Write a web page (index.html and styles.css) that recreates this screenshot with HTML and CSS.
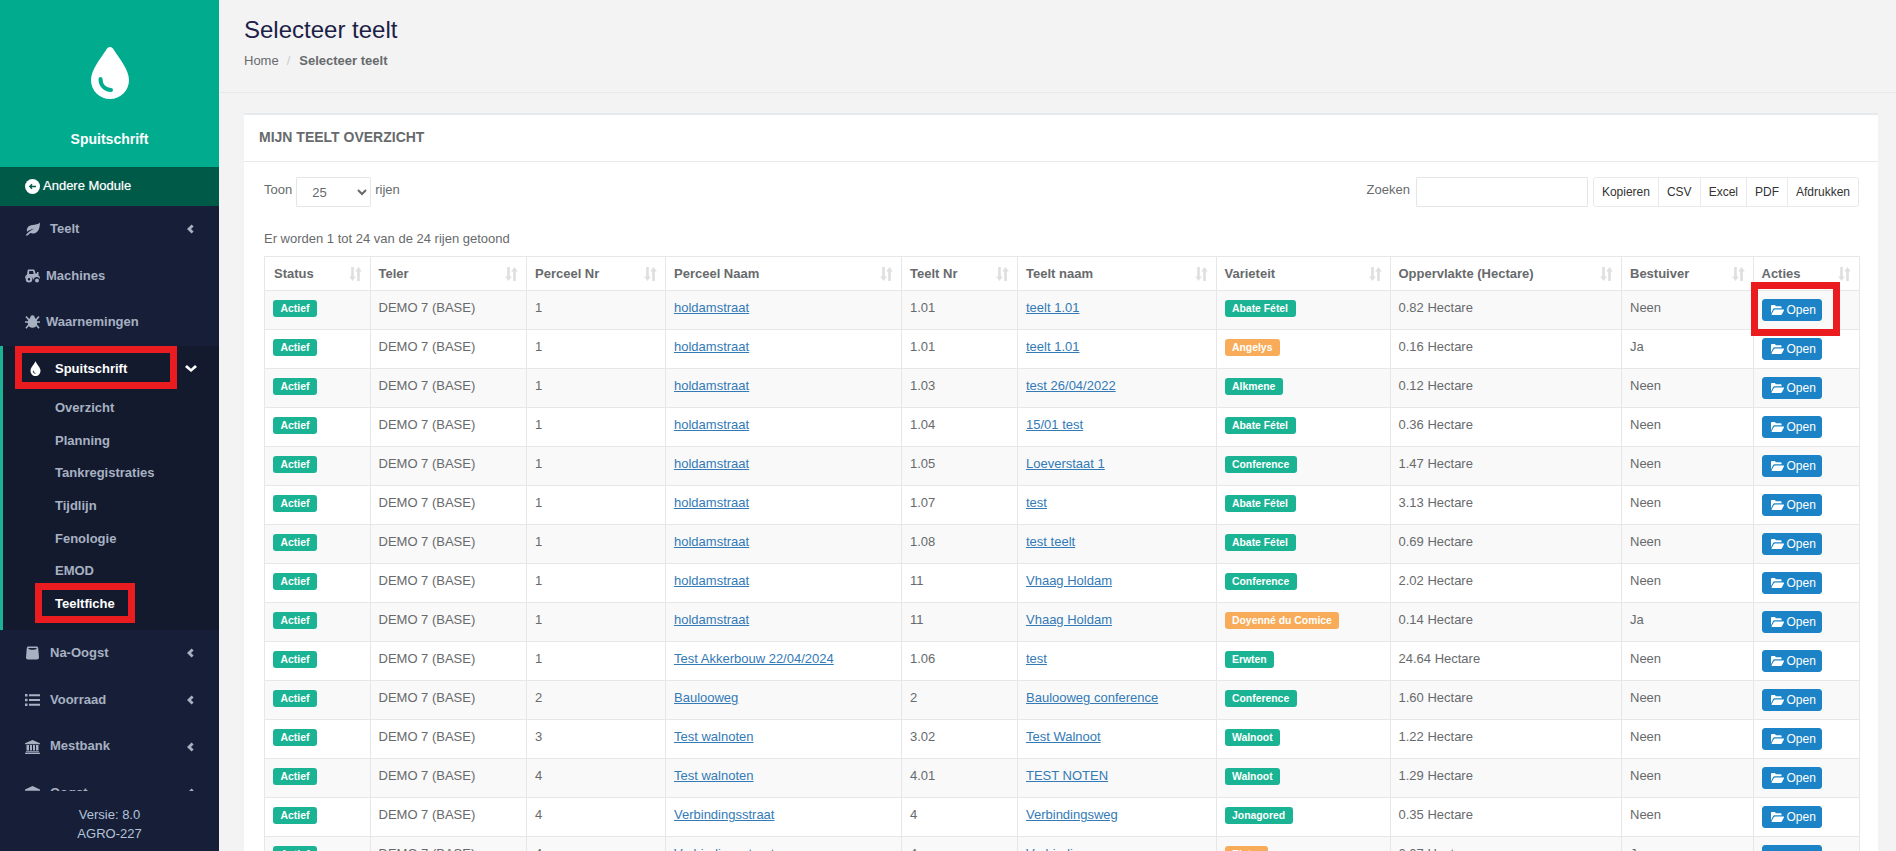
FILE: index.html
```html
<!DOCTYPE html>
<html lang="nl">

<head>
    <meta charset="UTF-8">
    <meta name="viewport" content="width=device-width, initial-scale=1.0">
    <title>Selecteer teelt</title>
    <link rel="stylesheet" href="styles.css">
</head>

<body>
    <svg class="icon-defs" aria-hidden="true">
        <symbol id="i-folder" viewBox="0 0 14 12">
            <path d="M0 9.600V1.900C0 1.200.5.700 1.200.700h2.600c.6 0 .9.300 1.100.8l.2.400h5.100c.7 0 1.200.5 1.200 1.200v1H3.900c-.7 0-1.200.3-1.600.9L0 9.600z"/>
            <path d="M1 11.300h9.600c.5 0 .9-.2 1.200-.7L14 6.400c.2-.5 0-.9-.6-.9H4.200c-.5 0-.9.200-1.200.7L.7 10.400c-.2.500 0 .9.300.9z"/>
        </symbol>
        <symbol id="i-sort" viewBox="0 0 13 14">
            <path d="M2.200 0h2.600v9.600h2L3.500 14 .2 9.600h2z"/>
            <path d="M8.200 14h2.600V4.400h2L9.500 0 6.200 4.400h2z"/>
        </symbol>
        <symbol id="i-left" viewBox="0 0 8 10">
            <path d="M5.600.4l2 2L5 5l2.600 2.600-2 2L1 5z"/>
        </symbol>
        <symbol id="i-down" viewBox="0 0 12 7">
            <path d="M2 0l4 3.800L10 0l2 2-6 5-6-5z"/>
        </symbol>
    </svg>

    <aside class="sidebar">
        <div class="brand">
            <svg class="brand-drop" viewBox="0 0 38 52">
                <path fill="#fff" d="M19 0c1.400 0 2.500.8 3.300 2C28 11 38 22.500 38 33c0 10.800-8.500 19-19 19S0 43.800 0 33C0 22.500 10 11 15.700 2 16.500.8 17.600 0 19 0z"/>
                <path fill="none" stroke="#00ab8e" stroke-width="4" stroke-linecap="round" d="M9.500 32c0 6.500 4.500 11 10.500 11"/>
            </svg>
            <div class="brand-name">Spuitschrift</div>
        </div>
        <a class="module-link" href="#">
            <svg class="module-icon" viewBox="0 0 15 15">
                <circle cx="7.500" cy="7.500" r="7.500" fill="#fff"/>
                <path fill="none" stroke="#005a48" stroke-width="1.300" d="M11 7.500H5M7 5.300L4.800 7.500 7 9.700"/>
            </svg>
            Andere Module
        </a>

        <nav class="side-scroll">
            <ul class="side-nav">
                <li>
                    <a class="nav-link" href="#">
                        <svg class="nav-icon" viewBox="0 0 16 14"><path d="M16 0c-.2 3.500-.5 7-2.500 9.300-2 2.400-5 3-7.800 2L2.800 14H.6C2 11.700 5.400 8.800 9.600 6.800 6.300 7.300 3.800 8.800 2.300 10 1 6 3.800 3 8 2.600 11 2.300 14 2 16 0z"/></svg>
                        Teelt
                        <svg class="nav-arrow"><use href="#i-left"/></svg>
                    </a>
                </li>
                <li>
                    <a class="nav-link" href="#">
                        <svg class="nav-icon tight" viewBox="0 0 15 13"><path fill-rule="evenodd" d="M3.500 0h5c.6 0 1 .3 1.200.9l.8 3.100h1.500V2.500h1.500V6c.9.500 1.500 1.400 1.500 2.500v.5h-.6a3.200 3.200 0 0 0-5.800 1H8a4 4 0 0 0-7.800-.5L0 8.500C0 7 .8 5.900 2 5.300L2.600.9C2.700.3 3 0 3.500 0zM4.300 1.500L4 4.500h4.700L8 1.500zM4 6.500a3 3 0 1 1 0 6.500 3 3 0 0 1 0-6.500zm0 2a1.200 1.200 0 1 0 0 2.500 1.200 1.200 0 0 0 0-2.500zM12 9a2 2 0 1 1 0 4 2 2 0 0 1 0-4z"/></svg>
                        Machines
                    </a>
                </li>
                <li>
                    <a class="nav-link" href="#">
                        <svg class="nav-icon tight" viewBox="0 0 15 13"><ellipse cx="7.500" cy="7" rx="4.800" ry="5.200"/><circle cx="7.500" cy="2" r="2.200"/><path fill="none" stroke="currentColor" stroke-width="1.600" d="M0 6.500h15M1 1l3 3.500M14 1l-3 3.500M1 12.700l3-3.700M14 12.700l-3-3.700"/></svg>
                        Waarnemingen
                    </a>
                </li>
                <li class="active">
                    <span class="mark-box mark-nav"></span>
                    <a class="nav-link" href="#">
                        <svg class="nav-icon drop" viewBox="0 0 15 15"><path fill-rule="evenodd" d="M7.500 0c.4 2.500 5 6 5 9.700 0 3-2.200 5.300-5 5.300s-5-2.300-5-5.300C2.500 6 7.100 2.500 7.500 0zM4.800 9.800c0 1.700 1.200 2.900 2.700 2.900v-.8c-1 0-1.900-.9-1.900-2.100z"/></svg>
                        Spuitschrift
                        <svg class="nav-arrow down"><use href="#i-down"/></svg>
                    </a>
                    <ul class="sub-nav">
                        <li><a href="#">Overzicht</a></li>
                        <li><a href="#">Planning</a></li>
                        <li><a href="#">Tankregistraties</a></li>
                        <li><a href="#">Tijdlijn</a></li>
                        <li><a href="#">Fenologie</a></li>
                        <li><a href="#">EMOD</a></li>
                        <li class="current"><span class="mark-box mark-sub"></span><a href="#">Teeltfiche</a></li>
                    </ul>
                </li>
                <li>
                    <a class="nav-link" href="#">
                        <svg class="nav-icon" viewBox="0 0 15 13"><path fill-rule="evenodd" d="M3.500 0h8c1 0 1.600.6 1.700 1.500l.8 9.500c0 1.200-.8 2-2 2H3c-1.200 0-2-.8-2-2l.8-9.500C1.900.6 2.500 0 3.500 0zm0 1.600v1c1.300.9 6.700.9 8 0v-1z"/></svg>
                        Na-Oogst
                        <svg class="nav-arrow"><use href="#i-left"/></svg>
                    </a>
                </li>
                <li>
                    <a class="nav-link" href="#">
                        <svg class="nav-icon" viewBox="0 0 15 12"><path d="M0 0h2.500v2.400H0zM4 .2h11v2H4zM0 4.800h2.500v2.400H0zM4 5h11v2H4zM0 9.600h2.500V12H0zM4 9.800h11v2H4z"/></svg>
                        Voorraad
                        <svg class="nav-arrow"><use href="#i-left"/></svg>
                    </a>
                </li>
                <li>
                    <a class="nav-link" href="#">
                        <svg class="nav-icon" viewBox="0 0 15 14"><path d="M7.500 0L15 3.200v1H0v-1zM1.500 5H4v5.500H1.500zM5 5h2v5.500H5zM8 5h2v5.500H8zM11 5h2.500v5.500H11zM1 11.200h13v1.100H1zM0 12.800h15V14H0z"/></svg>
                        Mestbank
                        <svg class="nav-arrow"><use href="#i-left"/></svg>
                    </a>
                </li>
                <li>
                    <a class="nav-link" href="#">
                        <svg class="nav-icon" viewBox="0 0 15 14"><path d="M7.500 0L15 3.600v1.200H0V3.600zM1.500 5.500h12V14h-12z"/></svg>
                        Oogst
                        <svg class="nav-arrow"><use href="#i-left"/></svg>
                    </a>
                </li>
            </ul>
        </nav>

        <div class="side-footer">
            <div>Versie: 8.0</div>
            <div>AGRO-227</div>
        </div>
    </aside>

    <main class="main">
        <div class="page-heading">
            <h1>Selecteer teelt</h1>
            <ol class="crumbs">
                <li><a href="#">Home</a></li>
                <li class="crumb-sep">/</li>
                <li><strong>Selecteer teelt</strong></li>
            </ol>
        </div>

        <div class="content">
            <div class="card">
                <div class="card-title">MIJN TEELT OVERZICHT</div>
                <div class="card-body">
                    <div class="toolbar">
                        <div class="toolbar-side">
                            <span class="toolbar-label">Toon</span>
                            <select class="length-select">
                                <option>25</option>
                                <option>50</option>
                                <option>100</option>
                            </select>
                            <span class="toolbar-label after">rijen</span>
                        </div>
                        <div class="toolbar-side">
                            <span class="toolbar-label">Zoeken</span>
                            <input class="search-input" type="search">
                            <div class="btn-group">
                                <button>Kopieren</button>
                                <button>CSV</button>
                                <button>Excel</button>
                                <button>PDF</button>
                                <button>Afdrukken</button>
                            </div>
                        </div>
                    </div>

                    <div class="table-info">Er worden 1 tot 24 van de 24 rijen getoond</div>

                    <table class="data-table">
                        <colgroup>
                            <col class="c-status"><col class="c-teler"><col class="c-pnr"><col class="c-pnaam"><col class="c-tnr">
                            <col class="c-tnaam"><col class="c-var"><col class="c-opp"><col class="c-best"><col class="c-act">
                        </colgroup>
                        <thead>
                            <tr>
                                <th><div class="th-in">Status<svg class="sort"><use href="#i-sort"/></svg></div></th>
                                <th><div class="th-in">Teler<svg class="sort"><use href="#i-sort"/></svg></div></th>
                                <th><div class="th-in">Perceel Nr<svg class="sort"><use href="#i-sort"/></svg></div></th>
                                <th><div class="th-in">Perceel Naam<svg class="sort"><use href="#i-sort"/></svg></div></th>
                                <th><div class="th-in">Teelt Nr<svg class="sort"><use href="#i-sort"/></svg></div></th>
                                <th><div class="th-in">Teelt naam<svg class="sort"><use href="#i-sort"/></svg></div></th>
                                <th><div class="th-in">Varieteit<svg class="sort"><use href="#i-sort"/></svg></div></th>
                                <th><div class="th-in">Oppervlakte (Hectare)<svg class="sort"><use href="#i-sort"/></svg></div></th>
                                <th><div class="th-in">Bestuiver<svg class="sort"><use href="#i-sort"/></svg></div></th>
                                <th><div class="th-in">Acties<svg class="sort"><use href="#i-sort"/></svg></div></th>
                            </tr>
                        </thead>
                        <tbody>
                            <tr><td><span class="label">Actief</span></td><td>DEMO 7 (BASE)</td><td>1</td><td><a href="#">holdamstraat</a></td><td>1.01</td><td><a href="#">teelt 1.01</a></td><td><span class="label">Abate Fétel</span></td><td>0.82 Hectare</td><td>Neen</td><td class="act-cell"><span class="mark-box mark-open"></span><button class="btn-open"><svg class="folder"><use href="#i-folder"/></svg>Open</button></td></tr>
                            <tr><td><span class="label">Actief</span></td><td>DEMO 7 (BASE)</td><td>1</td><td><a href="#">holdamstraat</a></td><td>1.01</td><td><a href="#">teelt 1.01</a></td><td><span class="label warn">Angelys</span></td><td>0.16 Hectare</td><td>Ja</td><td><button class="btn-open"><svg class="folder"><use href="#i-folder"/></svg>Open</button></td></tr>
                            <tr><td><span class="label">Actief</span></td><td>DEMO 7 (BASE)</td><td>1</td><td><a href="#">holdamstraat</a></td><td>1.03</td><td><a href="#">test 26/04/2022</a></td><td><span class="label">Alkmene</span></td><td>0.12 Hectare</td><td>Neen</td><td><button class="btn-open"><svg class="folder"><use href="#i-folder"/></svg>Open</button></td></tr>
                            <tr><td><span class="label">Actief</span></td><td>DEMO 7 (BASE)</td><td>1</td><td><a href="#">holdamstraat</a></td><td>1.04</td><td><a href="#">15/01 test</a></td><td><span class="label">Abate Fétel</span></td><td>0.36 Hectare</td><td>Neen</td><td><button class="btn-open"><svg class="folder"><use href="#i-folder"/></svg>Open</button></td></tr>
                            <tr><td><span class="label">Actief</span></td><td>DEMO 7 (BASE)</td><td>1</td><td><a href="#">holdamstraat</a></td><td>1.05</td><td><a href="#">Loeverstaat 1</a></td><td><span class="label">Conference</span></td><td>1.47 Hectare</td><td>Neen</td><td><button class="btn-open"><svg class="folder"><use href="#i-folder"/></svg>Open</button></td></tr>
                            <tr><td><span class="label">Actief</span></td><td>DEMO 7 (BASE)</td><td>1</td><td><a href="#">holdamstraat</a></td><td>1.07</td><td><a href="#">test</a></td><td><span class="label">Abate Fétel</span></td><td>3.13 Hectare</td><td>Neen</td><td><button class="btn-open"><svg class="folder"><use href="#i-folder"/></svg>Open</button></td></tr>
                            <tr><td><span class="label">Actief</span></td><td>DEMO 7 (BASE)</td><td>1</td><td><a href="#">holdamstraat</a></td><td>1.08</td><td><a href="#">test teelt</a></td><td><span class="label">Abate Fétel</span></td><td>0.69 Hectare</td><td>Neen</td><td><button class="btn-open"><svg class="folder"><use href="#i-folder"/></svg>Open</button></td></tr>
                            <tr><td><span class="label">Actief</span></td><td>DEMO 7 (BASE)</td><td>1</td><td><a href="#">holdamstraat</a></td><td>11</td><td><a href="#">Vhaag Holdam</a></td><td><span class="label">Conference</span></td><td>2.02 Hectare</td><td>Neen</td><td><button class="btn-open"><svg class="folder"><use href="#i-folder"/></svg>Open</button></td></tr>
                            <tr><td><span class="label">Actief</span></td><td>DEMO 7 (BASE)</td><td>1</td><td><a href="#">holdamstraat</a></td><td>11</td><td><a href="#">Vhaag Holdam</a></td><td><span class="label warn">Doyenné du Comice</span></td><td>0.14 Hectare</td><td>Ja</td><td><button class="btn-open"><svg class="folder"><use href="#i-folder"/></svg>Open</button></td></tr>
                            <tr><td><span class="label">Actief</span></td><td>DEMO 7 (BASE)</td><td>1</td><td><a href="#">Test Akkerbouw 22/04/2024</a></td><td>1.06</td><td><a href="#">test</a></td><td><span class="label">Erwten</span></td><td>24.64 Hectare</td><td>Neen</td><td><button class="btn-open"><svg class="folder"><use href="#i-folder"/></svg>Open</button></td></tr>
                            <tr><td><span class="label">Actief</span></td><td>DEMO 7 (BASE)</td><td>2</td><td><a href="#">Baulooweg</a></td><td>2</td><td><a href="#">Baulooweg conference</a></td><td><span class="label">Conference</span></td><td>1.60 Hectare</td><td>Neen</td><td><button class="btn-open"><svg class="folder"><use href="#i-folder"/></svg>Open</button></td></tr>
                            <tr><td><span class="label">Actief</span></td><td>DEMO 7 (BASE)</td><td>3</td><td><a href="#">Test walnoten</a></td><td>3.02</td><td><a href="#">Test Walnoot</a></td><td><span class="label">Walnoot</span></td><td>1.22 Hectare</td><td>Neen</td><td><button class="btn-open"><svg class="folder"><use href="#i-folder"/></svg>Open</button></td></tr>
                            <tr><td><span class="label">Actief</span></td><td>DEMO 7 (BASE)</td><td>4</td><td><a href="#">Test walnoten</a></td><td>4.01</td><td><a href="#">TEST NOTEN</a></td><td><span class="label">Walnoot</span></td><td>1.29 Hectare</td><td>Neen</td><td><button class="btn-open"><svg class="folder"><use href="#i-folder"/></svg>Open</button></td></tr>
                            <tr><td><span class="label">Actief</span></td><td>DEMO 7 (BASE)</td><td>4</td><td><a href="#">Verbindingsstraat</a></td><td>4</td><td><a href="#">Verbindingsweg</a></td><td><span class="label">Jonagored</span></td><td>0.35 Hectare</td><td>Neen</td><td><button class="btn-open"><svg class="folder"><use href="#i-folder"/></svg>Open</button></td></tr>
                            <tr><td><span class="label">Actief</span></td><td>DEMO 7 (BASE)</td><td>4</td><td><a href="#">Verbindingsstraat</a></td><td>4</td><td><a href="#">Verbindingsweg</a></td><td><span class="label warn">Elstar</span></td><td>0.07 Hectare</td><td>Ja</td><td><button class="btn-open"><svg class="folder"><use href="#i-folder"/></svg>Open</button></td></tr>
                        </tbody>
                    </table>
                </div>
            </div>
        </div>
    </main>
</body>
</html>
```

FILE: styles.css
```css
* {
    box-sizing: border-box;
}

html, body {
    margin: 0;
    padding: 0;
    height: 100%;
    overflow: hidden;
}

body {
    display: flex;
    background-color: #f3f3f4;
    font-family: "Liberation Sans", Arial, sans-serif;
    font-size: 13px;
    line-height: 1.42857;
    color: #676a6c;
}

a {
    color: #337ab7;
}

ul, ol {
    list-style: none;
    margin: 0;
    padding: 0;
}

.icon-defs {
    position: absolute;
    width: 0;
    height: 0;
}

/* red annotation frames */
.mark-box {
    position: absolute;
    border: 7px solid #ea1c20;
    pointer-events: none;
    z-index: 5;
}

.mark-nav {
    top: 0;
    left: 12px;
    width: 162px;
    height: 43px;
}

.mark-sub {
    top: -5px;
    left: 32px;
    width: 100px;
    height: 40px;
}

.mark-open {
    top: -9px;
    left: -3px;
    width: 89px;
    height: 54px;
}

/* sidebar */
.sidebar {
    width: 219px;
    flex: none;
    height: 100%;
    display: flex;
    flex-direction: column;
    background-color: #171f38;
    color: #a7b1c2;
}

.brand {
    height: 167px;
    flex: none;
    padding-top: 47px;
    background-color: #00ab8e;
    text-align: center;
}

.brand-drop {
    display: block;
    width: 38px;
    height: 52px;
    margin: 0 auto;
}

.brand-name {
    margin-top: 31px;
    font-size: 14px;
    font-weight: bold;
    color: #fff;
}

.module-link {
    height: 39px;
    flex: none;
    display: flex;
    align-items: center;
    padding-left: 25px;
    background-color: #005a48;
    color: #fff;
    text-decoration: none;
    text-shadow: 0 0 1px rgba(255, 255, 255, 0.5);
}

.module-icon {
    width: 15px;
    height: 15px;
    margin-right: 3px;
}

.side-scroll {
    flex: 1;
    min-height: 0;
    overflow: hidden;
}

.nav-link {
    display: flex;
    align-items: center;
    padding: 14px 25px;
    color: #a7b1c2;
    font-weight: bold;
    text-decoration: none;
}

.nav-icon {
    width: 15px;
    height: 14px;
    margin-right: 10px;
    fill: currentColor;
    color: #a7b1c2;
}

.nav-icon.tight {
    margin-right: 6px;
}

.nav-arrow {
    width: 8px;
    height: 10px;
    margin-left: auto;
    fill: #a7b1c2;
}

.side-nav > li {
    position: relative;
}

.side-nav > li.active {
    background-color: #131a2e;
    border-left: 3px solid #1ab394;
}

.active .nav-link {
    color: #fff;
}

.active .nav-icon {
    color: #fff;
}

.nav-icon.drop {
    margin-right: 12px;
    height: 15px;
}

.nav-arrow.down {
    width: 12px;
    height: 7px;
    margin-right: -3px;
    fill: #fff;
}

.sub-nav {
    padding-bottom: 10px;
}

.sub-nav li {
    position: relative;
}

.sub-nav a {
    display: block;
    padding: 7px 10px 7px 52px;
    font-weight: bold;
    color: #a7b1c2;
    text-decoration: none;
}

.sub-nav .current a {
    color: #fff;
}

.side-footer {
    height: 60px;
    flex: none;
    padding-top: 15px;
    text-align: center;
    color: #b4c3d9;
}

/* main column */
.main {
    flex: 1;
    min-width: 0;
}

.page-heading {
    height: 93px;
    padding: 17px 25px 0;
    border-bottom: 1px solid #e7eaec;
}

.page-heading h1 {
    margin: 0 0 9px;
    font-size: 24px;
    font-weight: normal;
    line-height: 1.1;
    color: #1c2147;
}

.crumbs {
    display: flex;
}

.crumbs a {
    color: #676a6c;
    text-decoration: none;
}

.crumb-sep {
    padding: 0 9px 0 8px;
    color: #ccc;
}

.content {
    padding: 20px 18px 0 25px;
}

.card {
    background-color: #fff;
    border-top: 2px solid #e7eaec;
}

.card-title {
    padding: 13px 15px 15px;
    font-size: 14px;
    font-weight: bold;
    line-height: 18px;
    border-bottom: 1px solid #e7eaec;
}

.card-body {
    padding: 15px 20px;
}

.toolbar {
    display: flex;
    justify-content: space-between;
    margin: 0 -1px 23px 0;
}

.toolbar-side {
    display: flex;
    align-items: center;
    height: 30px;
}

.toolbar-label {
    margin-right: 4px;
    margin-bottom: 3px;
}

.toolbar-label.after {
    margin: 0 0 3px 4px;
}

.length-select {
    width: 75px;
    height: 30px;
    padding: 0 11px;
    font-family: inherit;
    font-size: 13px;
    color: #676a6c;
    background-color: #fff;
    border: 1px solid #e5e6e7;
    border-radius: 1px;
}

.search-input {
    width: 172px;
    height: 30px;
    margin: 0 5px 0 2px;
    border: 1px solid #e5e6e7;
    border-radius: 1px;
    background-color: #fff;
}

.btn-group {
    display: flex;
}

.btn-group button {
    height: 30px;
    margin-left: -1px;
    padding: 0 8px;
    font-family: inherit;
    font-size: 12px;
    color: #333;
    background-color: #fff;
    border: 1px solid #e7eaec;
}

.btn-group button:first-child {
    margin-left: 0;
    border-radius: 3px 0 0 3px;
}

.btn-group button:last-child {
    border-radius: 0 3px 3px 0;
}

.table-info {
    margin-bottom: 7px;
}

/* table */
.data-table {
    width: 100%;
    table-layout: fixed;
    border-collapse: collapse;
    background-color: #fff;
}

.c-status { width: 105.5px; }
.c-teler { width: 156.5px; }
.c-pnr { width: 139px; }
.c-pnaam { width: 236px; }
.c-tnr { width: 116px; }
.c-tnaam { width: 198.5px; }
.c-var { width: 174px; }
.c-opp { width: 231.5px; }
.c-best { width: 131.5px; }
.c-act { width: 106px; }

.data-table th,
.data-table td {
    padding: 8px;
    border: 1px solid #e7e7e7;
    text-align: left;
    vertical-align: top;
}

.data-table th {
    padding-bottom: 7px;
}

.data-table th:first-child {
    padding-left: 9px;
}

.th-in {
    display: flex;
    justify-content: space-between;
    align-items: center;
}

.sort {
    width: 13px;
    height: 14px;
    fill: #dfdfdf;
    flex: none;
}

.data-table tbody tr:nth-child(odd) {
    background-color: #f9f9f9;
}

.label {
    display: inline-block;
    vertical-align: top;
    margin-top: 1px;
    padding: 3px 7.5px;
    font-size: 10.4px;
    font-weight: bold;
    line-height: 11px;
    color: #fff;
    background-color: #1ab394;
    border-radius: 3px;
}

.label.warn {
    background-color: #f8ac59;
}

.act-cell {
    position: relative;
}

.btn-open {
    display: inline-flex;
    align-items: center;
    vertical-align: top;
    width: 60px;
    height: 22px;
    padding: 0 0 0 8px;
    font-family: inherit;
    font-size: 12px;
    color: #fff;
    background-color: #1c84c6;
    border: 1px solid #1c84c6;
    border-radius: 3px;
}

.folder {
    width: 13px;
    height: 12px;
    margin-right: 3px;
    fill: #fff;
    flex: none;
}
```
